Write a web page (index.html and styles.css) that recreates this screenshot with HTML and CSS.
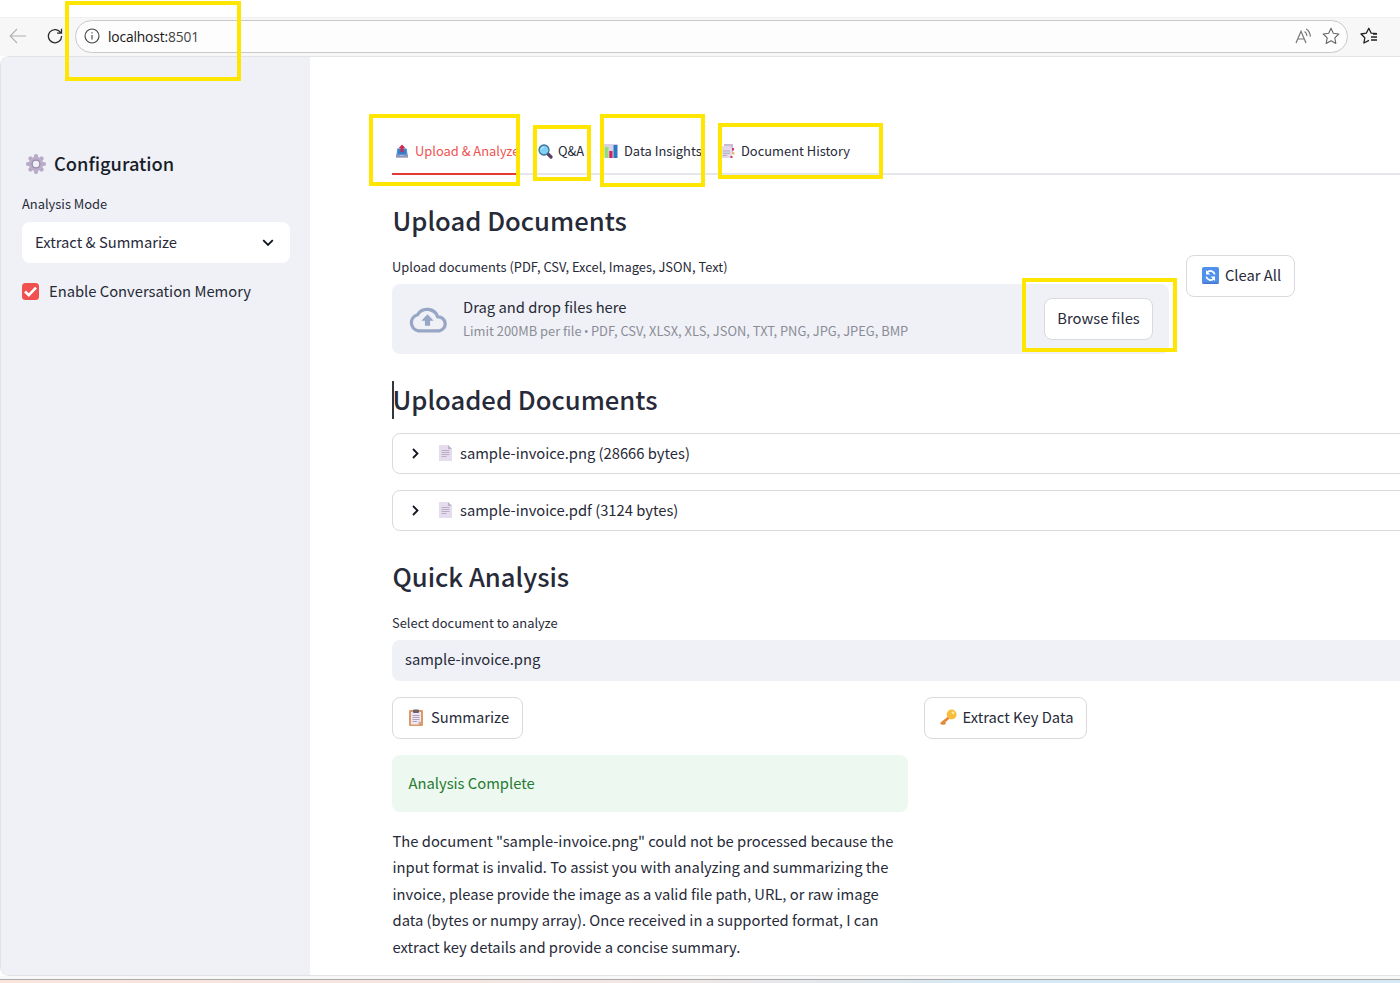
FILE: index.html
```html
<!DOCTYPE html>
<html lang="en">
<head>
    <meta charset="UTF-8">
    <meta name="viewport" content="width=device-width, initial-scale=1.0">
    <title>localhost:8501</title>
    <link rel="stylesheet" href="styles.css">
</head>
<body>
    <div class="window">
        <header class="toolbar">
            <svg class="back" width="18" height="16" viewBox="0 0 18 16" fill="none" stroke="#b0b0b0" stroke-width="1.1"><path d="M17 8H1.5M8 1L1.2 8L8 15"/></svg>
            <svg class="reload" width="16" height="16" viewBox="0 0 16 16" fill="none" stroke="#2b2b2b" stroke-width="1.3"><path d="M13.8 5A6.6 6.6 0 1 0 14.6 8M14.5 .8V5.2H10"/></svg>
            <div class="address">
                <svg width="16" height="16" viewBox="0 0 16 16" fill="none" stroke="#444" stroke-width="1.1"><circle cx="8" cy="8" r="7"/><path d="M8 7v4.5M8 4.2v1.4"/></svg>
                <span class="url"><b>localhost:</b>8501</span>
                <svg class="read" width="17" height="16" viewBox="0 0 17 16" fill="none" stroke="#777" stroke-width="1.2"><path d="M1 15L6 3.2L11 15M2.8 11H9.2M9.6 3.4Q11.8 5 12 8M11.2 1Q15 3.4 15.4 8.6"/></svg>
                <svg class="star" width="18" height="18" viewBox="0 0 18 18" fill="none" stroke="#666" stroke-width="1.1" stroke-linejoin="round"><path d="M9 1.3L11.3 6.3L16.8 7L12.8 10.8L13.8 16.4L9 13.7L4.2 16.4L5.2 10.8L1.2 7L6.7 6.3Z"/></svg>
            </div>
            <svg class="favorites" width="18" height="18" viewBox="0 0 18 18" fill="none" stroke="#222" stroke-width="1.3" stroke-linejoin="round"><path d="M17 6.7L11.2 6.2L8.8 1.3L6.3 6.2L1 7L4.8 10.8L3.9 16L9 13.4M11 10H17M11 13H17M13 7.2H17"/></svg>
        </header>

        <div class="page">
            <aside class="sidebar">
                <h2>
                    <svg width="22" height="22" viewBox="0 0 22 22"><g stroke="#b8abc9" stroke-width="4.2" stroke-linecap="round"><path d="M11 3V19M3 11H19M5.4 5.4L16.6 16.6M16.6 5.4L5.4 16.6"/></g><circle cx="11" cy="11" r="7.2" fill="#b9adca"/><circle cx="11" cy="11" r="4.5" fill="#998bab"/><circle cx="11" cy="11" r="3.2" fill="#eff1f6"/></svg>
                    <span>Configuration</span>
                </h2>
                <label>Analysis Mode</label>
                <div class="select">
                    <span>Extract &amp; Summarize</span>
                    <svg width="12" height="8" viewBox="0 0 12 8" fill="none" stroke="#111722" stroke-width="1.9"><path d="M1.2 1.2L6 6L10.8 1.2"/></svg>
                </div>
                <div class="check">
                    <svg width="17" height="17" viewBox="0 0 17 17"><rect width="17" height="17" rx="3.5" fill="#f0504f"/><path d="M3 8.5L6.8 12.2L14 4.6" fill="none" stroke="#fff" stroke-width="2.6"/></svg>
                    <span>Enable Conversation Memory</span>
                </div>
            </aside>

            <main>
                <nav class="tabs">
                    <div class="tab tab-upload active">
                        <svg width="12" height="14" viewBox="0 0 14 15"><path d="M1.5 6H12.5L14 12V15H0V12Z" fill="#b9b5cc"/><path d="M1.5 4.5H12.5V12H1.5Z" fill="#2f83cf"/><path d="M0 12H4L5 13.3H9L10 12H14V15H0Z" fill="#8a96bd"/><path d="M7 0L11 4.4H8.6V9H5.4V4.4H3Z" fill="#d4254d"/></svg>
                        <span>Upload &amp; Analyze</span>
                    </div>
                    <div class="tab tab-qa">
                        <svg width="15" height="15" viewBox="0 0 15 15"><path d="M9.5 9.5L13 13" stroke="#584066" stroke-width="3.2" stroke-linecap="round"/><circle cx="6" cy="6" r="5" fill="#7fd0f2" stroke="#3c6f99" stroke-width="1.3"/><path d="M3.3 5.5Q3.7 3.5 6 3.2" fill="none" stroke="#bfeaff"/></svg>
                        <span>Q&amp;A</span>
                    </div>
                    <div class="tab tab-insights">
                        <svg width="14" height="14" viewBox="0 0 14 14"><rect width="14" height="14" rx="1" fill="#d9d2e3"/><rect x="1" y="3" width="3.3" height="11" fill="#90df72"/><rect x="5.3" y="7" width="3.2" height="7" fill="#cf2459"/><rect x="9.5" y="1" width="3.8" height="13" fill="#267bc9"/></svg>
                        <span>Data Insights</span>
                    </div>
                    <div class="tab tab-history">
                        <svg width="14" height="15" viewBox="0 0 14 15"><path d="M3 0H12V10H3Z" fill="#c8bbd3"/><path d="M0 2H9L11 4V14H0Z" fill="#e2d9ea"/><path d="M2 7H9M2 9.2H9M2 11.4H6" stroke="#b4a8c0"/><path d="M11 4h2v2.4h-2zM9.5 12h2v2h-2z" fill="#d4325d"/><path d="M11.6 8.2h1.8v2.2h-1.8z" fill="#eeb344"/></svg>
                        <span>Document History</span>
                    </div>
                </nav>

                <section class="upload">
                    <div class="uploader">
                        <h3>Upload Documents</h3>
                        <label>Upload documents (PDF, CSV, Excel, Images, JSON, Text)</label>
                        <div class="dropzone">
                            <svg width="39" height="27" viewBox="0 0 38 26"><path d="M30.5 24H10A8 8 0 0 1 9.2 8.4A11 11 0 0 1 29 10.5A6.8 6.8 0 0 1 30.5 24Z" fill="none" stroke="#97a6c4" stroke-width="3.2" stroke-linejoin="round"/><path d="M19 8L25 14.2H21.5V19H16.5V14.2H13Z" fill="#97a6c4"/></svg>
                            <div class="hint">
                                <p>Drag and drop files here</p>
                                <small>Limit 200MB per file <i class="dot">•</i> PDF, CSV, XLSX, XLS, JSON, TXT, PNG, JPG, JPEG, BMP</small>
                            </div>
                            <button class="browse"><span>Browse files</span></button>
                        </div>
                    </div>
                    <button class="clear">
                        <svg width="17" height="17" viewBox="0 0 17 17"><rect width="17" height="17" rx="2" fill="#4f91ea"/><path d="M.5 16.2H16.5" stroke="#4968bd"/><path d="M12.7 7.4A4.3 4.3 0 0 0 5.2 5.5M4.3 9.6A4.3 4.3 0 0 0 11.8 11.5" fill="none" stroke="#fff" stroke-width="1.8"/><path d="M4 3V7.4H8.4ZM13 14V9.6H8.6Z" fill="#fff"/></svg>
                        <span>Clear All</span>
                    </button>
                </section>

                <h3 class="uploaded"><i class="caret"></i>Uploaded Documents</h3>
                <div class="file">
                    <svg width="7" height="11" viewBox="0 0 7 11" fill="none" stroke="#111722" stroke-width="1.8"><path d="M1 1L5.5 5.5L1 10"/></svg>
                    <svg class="doc" width="13" height="16" viewBox="0 0 13 16"><path d="M0 0H9L13 4V16H0Z" fill="#e5dced"/><path d="M9 0V4H13Z" fill="#bcb1c9"/><path d="M2.5 5.5H10.5M2.5 7.5H10.5M2.5 9.5H10.5M2.5 11.5H7.5" stroke="#b9adc5"/></svg>
                    <span>sample-invoice.png (28666 bytes)</span>
                </div>
                <div class="file">
                    <svg width="7" height="11" viewBox="0 0 7 11" fill="none" stroke="#111722" stroke-width="1.8"><path d="M1 1L5.5 5.5L1 10"/></svg>
                    <svg class="doc" width="13" height="16" viewBox="0 0 13 16"><path d="M0 0H9L13 4V16H0Z" fill="#e5dced"/><path d="M9 0V4H13Z" fill="#bcb1c9"/><path d="M2.5 5.5H10.5M2.5 7.5H10.5M2.5 9.5H10.5M2.5 11.5H7.5" stroke="#b9adc5"/></svg>
                    <span>sample-invoice.pdf (3124 bytes)</span>
                </div>

                <h3 class="quick">Quick Analysis</h3>
                <label>Select document to analyze</label>
                <div class="picked">sample-invoice.png</div>

                <section class="analysis">
                    <div>
                        <button class="summarize">
                            <svg width="14" height="17" viewBox="0 0 14 17"><rect y="1" width="14" height="16" rx="1" fill="#dd9a62"/><path d="M2 3H12V12.5L9.5 15.5H2Z" fill="#eee6f4"/><path d="M12 12.5H9.5V15.5Z" fill="#bcaecb"/><rect x="4" y=".5" width="6" height="3.5" rx="1" fill="#6b6374"/><path d="M3.5 6.5H10.5M3.5 8.5H10.5M3.5 10.5H10.5M3.5 12.5H8" stroke="#afa2bb"/></svg>
                            <span>Summarize</span>
                        </button>
                        <div class="success">Analysis Complete</div>
                        <p class="result">The document "sample-invoice.png" could not be processed because the<br>input format is invalid. To assist you with analyzing and summarizing the<br>invoice, please provide the image as a valid file path, URL, or raw image<br>data (bytes or numpy array). Once received in a supported format, I can<br>extract key details and provide a concise summary.</p>
                    </div>
                    <button class="extract">
                        <svg width="17" height="17" viewBox="0 0 18 17"><path d="M10 8L2 14.7L4 14.8L5.6 13.4" fill="none" stroke="#e2893b" stroke-width="3" stroke-linejoin="round"/><circle cx="12.3" cy="5.3" r="5.2" fill="#f8bd3d"/><circle cx="13.8" cy="3.6" r="1.5" fill="#fff0a5"/></svg>
                        <span>Extract Key Data</span>
                    </button>
                </section>
            </main>
        </div>
        <footer class="edge"></footer>

        <!-- highlight frames -->
        <div class="mark mark-url"></div>
        <div class="mark mark-upload"></div>
        <div class="mark mark-qa"></div>
        <div class="mark mark-insights"></div>
        <div class="mark mark-history"></div>
        <div class="mark mark-browse"></div>
    </div>
</body>
</html>
```
FILE: styles.css
```css
* {
    box-sizing: border-box;
}

body {
    margin: 0;
    font-family: "Noto Sans CJK SC", sans-serif;
    font-size: 14.76px;
    line-height: 24px;
    color: #272a38;
    background: #fff;
}

h2, h3, p {
    margin: 0;
}

svg {
    display: block;
    flex: none;
}

span, label, small, button, h2, h3 {
    white-space: nowrap;
}

.window {
    position: relative;
    width: 1400px;
    height: 983px;
    overflow: hidden;
    padding-top: 17px;
    background: #fff;
}

/* Browser toolbar */
.toolbar {
    display: flex;
    align-items: center;
    height: 39px;
    padding: 0 0 2px 9px;
    background: #f7f7f7;
    border-top: 1px solid #f0f0f0;
}

.reload {
    margin: 0 12px 0 20px;
}

.address {
    display: flex;
    align-items: center;
    width: 1273px;
    height: 33px;
    padding: 0 7px 0 8px;
    background: #fdfdfd;
    border: 1px solid #c9c9c9;
    border-radius: 17px;
}

.url {
    margin-left: 8px;
    padding-top: 1px;
    font-family: "Open Sans", sans-serif;
    font-size: 13.8px;
    letter-spacing: -0.15px;
    color: #444;
}

.url b {
    font-weight: normal;
    color: #161616;
}

.read {
    margin-left: auto;
}

.star {
    margin-left: 10px;
}

.favorites {
    margin-left: 12px;
}

.page {
    display: flex;
    height: 920px;
    border: 1px solid #e2e3e5;
    border-right: 0;
    border-radius: 9px 0 0 9px;
    overflow: hidden;
}

/* Sidebar */
.sidebar {
    flex: none;
    width: 309px;
    padding: 92px 20px 0 21px;
    background: #eff1f6;
}

.sidebar h2 {
    display: flex;
    align-items: center;
    gap: 7px;
    height: 30px;
    padding-left: 3px;
    font-size: 18.3px;
    font-weight: 500;
    color: #181d29;
}

h2 span,
.select span,
.file span,
button span {
    margin-top: -2px;
}

label {
    display: block;
    height: 22px;
    font-size: 12.9px;
    line-height: 22px;
}

.sidebar label {
    margin-top: 14px;
}

.select {
    display: flex;
    align-items: center;
    justify-content: space-between;
    height: 41px;
    margin-top: 7px;
    padding: 0 16px 0 13px;
    background: #fff;
    border-radius: 8px;
}

.check {
    display: flex;
    align-items: center;
    gap: 10px;
    margin-top: 16px;
}

/* Main column, runs past the right edge */
main {
    flex: none;
    width: 1150px;
    padding: 74px 0 0 82px;
    background: #fff;
}

.tabs {
    display: flex;
    height: 44px;
    border-bottom: 2px solid #e6e7eb;
}

.tab {
    display: flex;
    align-items: center;
    gap: 6px;
    height: 44px;
    padding-bottom: 4px;
    font-size: 12.9px;
}

.tab-upload {
    width: 125px;
    gap: 7px;
    margin-right: 21px;
    padding-left: 4px;
}

.tab-qa {
    width: 66px;
    gap: 5px;
}

.tab-insights {
    width: 117px;
}

.active {
    color: #ef5350;
    border-bottom: 2px solid #e53935;
    padding-bottom: 2px;
}

h3 {
    height: 40px;
    padding-left: 0.5px;
    font-size: 25.65px;
    font-weight: 500;
    line-height: 38px;
}

.upload {
    display: flex;
    gap: 17px;
    padding-top: 26px;
}

.uploader {
    width: 777px;
}

.uploader label {
    margin-top: 15px;
}

.dropzone {
    display: flex;
    align-items: center;
    height: 70px;
    margin-top: 6px;
    padding: 0 16px;
    background: #eff1f6;
    border-radius: 8px;
}

.hint {
    margin-left: 16px;
}

.hint small {
    display: block;
    font-size: 12.9px;
    color: #8b8d96;
}

/* the CJK bullet is too wide */
.dot {
    font-family: "Open Sans", sans-serif;
    font-style: normal;
    font-size: 12px;
    margin: 0 -0.5px;
}

button {
    display: flex;
    align-items: center;
    justify-content: center;
    height: 42px;
    padding: 0;
    font: inherit;
    color: inherit;
    background: #fff;
    border: 1px solid #d8dade;
    border-radius: 8px;
}

.browse {
    width: 109px;
    margin-left: auto;
}

.clear {
    gap: 6px;
    width: 109px;
    margin-top: 54px;
    padding-left: 2px;
}

.uploaded {
    display: flex;
    margin-top: 26px;
    padding-left: 0;
}

.caret {
    width: 2px;
    height: 38px;
    margin: 1px -1.5px 0 0;
    background: #333641;
}

.file {
    display: flex;
    align-items: center;
    height: 41px;
    margin-top: 16px;
    padding-left: 19px;
    border: 1px solid #d8dade;
    border-radius: 8px;
}

.uploaded + .file {
    margin-top: 13px;
}

.doc {
    margin: -1px 8px 0 20px;
}

.quick {
    margin-top: 26px;
}

.quick + label {
    margin-top: 15px;
}

.picked {
    height: 41px;
    margin-top: 6px;
    padding-left: 13px;
    line-height: 38px;
    background: #eff1f6;
    border-radius: 8px 0 0 8px;
}

.analysis {
    display: grid;
    grid-template-columns: 516px auto;
    column-gap: 16px;
    margin-top: 16px;
}

.summarize {
    gap: 8px;
    width: 131px;
    padding-left: 3px;
}

.extract {
    gap: 6px;
    width: 163px;
    padding-left: 2px;
}

.summarize svg,
.extract svg,
.clear svg {
    margin-top: -2px;
}

.success {
    height: 57px;
    margin-top: 16px;
    padding-left: 16.5px;
    line-height: 55px;
    color: #267a31;
    background: #edf8f0;
    border-radius: 8px;
}

.result {
    margin-top: 16px;
    padding-left: 0.5px;
    line-height: 26.4px;
    white-space: nowrap;
}

/* Bottom edge of the window and the desktop below */
.edge {
    height: 7px;
    margin-top: 0;
    background: linear-gradient(90deg, #f9e5dc, #f3e6e3 45%, #d6e8f3 70%, #d6e8f3);
    border-top: 3px solid #f8f8f8;
    box-shadow: inset 0 1px #aaa;
}

/* Highlight frames */
.mark {
    position: absolute;
    border: 4px solid #ffe600;
}

.mark-url {
    left: 65px;
    top: 1px;
    width: 176px;
    height: 80px;
}

.mark-upload {
    left: 369px;
    top: 114px;
    width: 151px;
    height: 72px;
}

.mark-qa {
    left: 533px;
    top: 125px;
    width: 58px;
    height: 56px;
}

.mark-insights {
    left: 600px;
    top: 114px;
    width: 105px;
    height: 73px;
}

.mark-history {
    left: 718px;
    top: 123px;
    width: 165px;
    height: 56px;
}

.mark-browse {
    left: 1022px;
    top: 278px;
    width: 155px;
    height: 74px;
}
```
